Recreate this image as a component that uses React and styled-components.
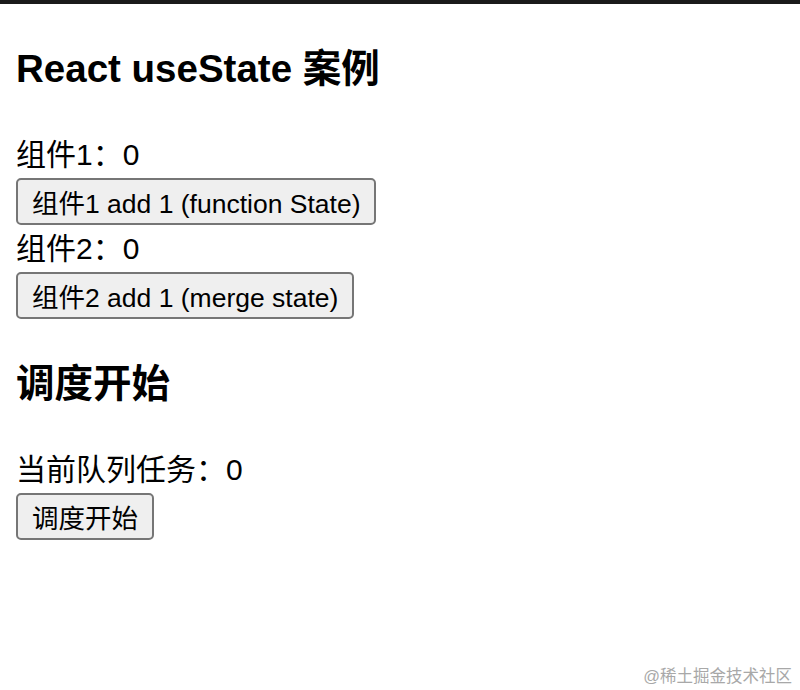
import React, { useState } from "react";
import styled, { createGlobalStyle } from "styled-components";

const Global = createGlobalStyle`
  html, body { margin: 0; padding: 0; background: #fff; }
  body { font-family: "Liberation Sans", "Noto Sans CJK SC", sans-serif; color: #000; overflow: hidden; }
`;

const TopBar = styled.div`
  height: 4px;
  background: #1a1a1a;
`;

const Page = styled.div`
  position: relative;
  display: flow-root;
  box-sizing: border-box;
  height: 686px;
  padding: 0 16px;
`;

const Heading = styled.h2`
  margin: 41px 0 38px;
  font-size: 38.5px;
  line-height: 48px;
  font-weight: bold;
`;

const Line = styled.div`
  font-size: 30px;
  line-height: 47px;
  height: 47px;
`;

const Button = styled.button`
  display: block;
  box-sizing: border-box;
  height: 47px;
  padding: 0 14px;
  font-family: "Liberation Sans", "Noto Sans CJK SC", sans-serif;
  font-size: 26.5px;
  color: #000;
  background: #efefef;
  border: 2px solid #767676;
  border-radius: 5px;
  cursor: pointer;
`;

const Watermark = styled.div`
  position: absolute;
  right: 8px;
  bottom: 4px;
  font-size: 16.5px;
  line-height: 20px;
  color: #a8a8a8;
`;

export default function App() {
  const [c1, setC1] = useState(0);
  const [c2, setC2] = useState({ count: 0 });
  const [queue, setQueue] = useState(0);
  return (
    <>
      <Global />
      <TopBar />
      <Page>
        <Heading>React useState 案例</Heading>
        <Line>组件1：{c1}</Line>
        <Button onClick={() => setC1((v) => v + 1)}>组件1 add 1 (function State)</Button>
        <Line>组件2：{c2.count}</Line>
        <Button onClick={() => setC2({ ...c2, count: c2.count + 1 })}>组件2 add 1 (merge state)</Button>
        <Heading>调度开始</Heading>
        <Line>当前队列任务：{queue}</Line>
        <Button onClick={() => setQueue(0)}>调度开始</Button>
        <Watermark>@稀土掘金技术社区</Watermark>
      </Page>
    </>
  );
}
